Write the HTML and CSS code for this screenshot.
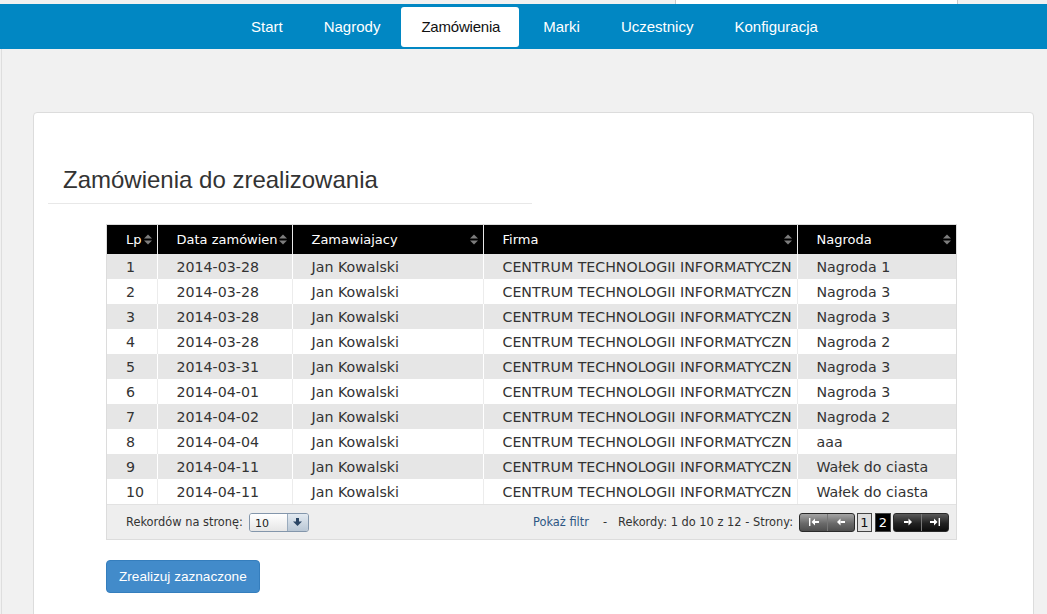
FILE: index.html
```html
<!DOCTYPE html>
<html lang="pl">
<head>
<meta charset="utf-8">
<title>Zamówienia</title>
<link rel="stylesheet" href="styles.css">
</head>
<body>
<div class="topstrip"><div class="seg-a"></div><div class="seg-b"></div><div class="seg-c"></div></div>
<nav class="navbar">
  <a href="#">Start</a>
  <a href="#">Nagrody</a>
  <a href="#" class="active">Zamówienia</a>
  <a href="#">Marki</a>
  <a href="#">Uczestnicy</a>
  <a href="#">Konfiguracja</a>
</nav>
<div class="main">
  <div class="card">
    <div class="page-header"><h3>Zamówienia do zrealizowania</h3></div>
    <div class="grid-wrap">
      <table class="grid">
        <colgroup><col class="c1"><col class="c2"><col class="c3"><col class="c4"><col class="c5"></colgroup>
        <thead>
          <tr>
            <th>Lp<span class="sort"><svg width="8" height="11" viewBox="0 0 8 11"><polygon points="0,4.5 4,0.5 8,4.5"/><polygon points="0,6.5 8,6.5 4,10.5"/></svg></span></th>
            <th>Data zamówien<span class="sort"><svg width="8" height="11" viewBox="0 0 8 11"><polygon points="0,4.5 4,0.5 8,4.5"/><polygon points="0,6.5 8,6.5 4,10.5"/></svg></span></th>
            <th>Zamawiajacy<span class="sort"><svg width="8" height="11" viewBox="0 0 8 11"><polygon points="0,4.5 4,0.5 8,4.5"/><polygon points="0,6.5 8,6.5 4,10.5"/></svg></span></th>
            <th>Firma<span class="sort"><svg width="8" height="11" viewBox="0 0 8 11"><polygon points="0,4.5 4,0.5 8,4.5"/><polygon points="0,6.5 8,6.5 4,10.5"/></svg></span></th>
            <th>Nagroda<span class="sort"><svg width="8" height="11" viewBox="0 0 8 11"><polygon points="0,4.5 4,0.5 8,4.5"/><polygon points="0,6.5 8,6.5 4,10.5"/></svg></span></th>
          </tr>
        </thead>
        <tbody>
          <tr><td>1</td><td>2014-03-28</td><td>Jan Kowalski</td><td>CENTRUM TECHNOLOGII INFORMATYCZN</td><td>Nagroda 1</td></tr>
          <tr><td>2</td><td>2014-03-28</td><td>Jan Kowalski</td><td>CENTRUM TECHNOLOGII INFORMATYCZN</td><td>Nagroda 3</td></tr>
          <tr><td>3</td><td>2014-03-28</td><td>Jan Kowalski</td><td>CENTRUM TECHNOLOGII INFORMATYCZN</td><td>Nagroda 3</td></tr>
          <tr><td>4</td><td>2014-03-28</td><td>Jan Kowalski</td><td>CENTRUM TECHNOLOGII INFORMATYCZN</td><td>Nagroda 2</td></tr>
          <tr><td>5</td><td>2014-03-31</td><td>Jan Kowalski</td><td>CENTRUM TECHNOLOGII INFORMATYCZN</td><td>Nagroda 3</td></tr>
          <tr><td>6</td><td>2014-04-01</td><td>Jan Kowalski</td><td>CENTRUM TECHNOLOGII INFORMATYCZN</td><td>Nagroda 3</td></tr>
          <tr><td>7</td><td>2014-04-02</td><td>Jan Kowalski</td><td>CENTRUM TECHNOLOGII INFORMATYCZN</td><td>Nagroda 2</td></tr>
          <tr><td>8</td><td>2014-04-04</td><td>Jan Kowalski</td><td>CENTRUM TECHNOLOGII INFORMATYCZN</td><td>aaa</td></tr>
          <tr><td>9</td><td>2014-04-11</td><td>Jan Kowalski</td><td>CENTRUM TECHNOLOGII INFORMATYCZN</td><td>Wałek do ciasta</td></tr>
          <tr><td>10</td><td>2014-04-11</td><td>Jan Kowalski</td><td>CENTRUM TECHNOLOGII INFORMATYCZN</td><td>Wałek do ciasta</td></tr>
        </tbody>
      </table>
      <div class="grid-footer">
        <div class="per-page">
          <span>Rekordów na stronę:</span>
          <div class="select">
            <span class="select-val">10</span>
            <span class="select-btn"><svg width="9" height="8" viewBox="0 0 9 8"><rect x="3" y="0" width="3" height="4"/><polygon points="0,3.5 9,3.5 4.5,8"/></svg></span>
          </div>
        </div>
        <div class="pager-info">
          <a href="#" class="filter">Pokaż filtr</a>
          <span class="dash">-</span>
          <span>Rekordy: 1 do 10 z 12 - Strony:</span>
          <div class="pbtn-group light">
            <span class="pbtn"><svg width="10" height="8" viewBox="0 0 10 8"><rect x="0" y="0" width="1.4" height="8"/><polygon points="2.5,4 6,0.5 6,7.5"/><rect x="6" y="3" width="4" height="2"/></svg></span>
            <span class="pbtn"><svg width="8" height="8" viewBox="0 0 8 8"><polygon points="0,4 3.5,0.5 3.5,7.5"/><rect x="3.5" y="3" width="4.5" height="2"/></svg></span>
          </div>
          <span class="page">1</span>
          <span class="page current">2</span>
          <div class="pbtn-group dark">
            <span class="pbtn"><svg width="8" height="8" viewBox="0 0 8 8"><rect x="0" y="3" width="4.5" height="2"/><polygon points="4.5,0.5 8,4 4.5,7.5"/></svg></span>
            <span class="pbtn"><svg width="10" height="8" viewBox="0 0 10 8"><rect x="0" y="3" width="4" height="2"/><polygon points="4,0.5 7.5,4 4,7.5"/><rect x="8.6" y="0" width="1.4" height="8"/></svg></span>
          </div>
        </div>
      </div>
    </div>
    <button class="btn-primary" type="button">Zrealizuj zaznaczone</button>
  </div>
</div>
</body>
</html>
```

FILE: styles.css
```css
* { box-sizing: border-box; }
html, body { margin: 0; padding: 0; }
body {
  background: #f1f1f1;
  font-family: "Liberation Sans", Arial, sans-serif;
  width: 1047px;
  height: 614px;
  overflow: hidden;
}

.topstrip { display: flex; height: 4px; }
.topstrip .seg-a { width: 676px; background: #f1f1f1; border-right: 1px solid #c9c9c9; }
.topstrip .seg-b { width: 282px; background: #fff; border-right: 1px solid #c9c9c9; }
.topstrip .seg-c { flex: 1; background: #f1f1f1; }

.navbar {
  background: #0187c3;
  height: 45px;
  display: flex;
  align-items: center;
  padding-left: 231px;
}
.navbar a {
  display: block;
  height: 40px;
  line-height: 40px;
  padding: 0 20px;
  margin-right: 1px;
  color: #fff;
  font-size: 15px;
  text-decoration: none;
  border-radius: 3px;
}
.navbar a.active {
  background: #fff;
  color: #111;
  padding: 0 19px 0 20px;
  margin-right: 4px;
  letter-spacing: -0.2px;
}

.main {
  margin-left: 1px;
  border-left: 1px solid #dedede;
  padding: 63px 13px 0 31px;
}

.card {
  background: #fff;
  border: 1px solid #dcdcdc;
  border-radius: 4px;
  min-height: 560px;
  padding: 0 14px;
}

.page-header {
  width: 484px;
  margin-top: 54px;
  padding: 0 15px 10px;
  border-bottom: 1px solid #e8e8e8;
}
.page-header h3 {
  margin: 0;
  font-size: 24px;
  line-height: 26px;
  font-weight: normal;
  color: #333;
}

.grid-wrap {
  margin: 20px 0 0 58px;
  width: 851px;
  border: 1px solid #dcdcdc;
  font-family: "DejaVu Sans", Verdana, sans-serif;
}
.grid {
  width: 849px;
  table-layout: fixed;
  border-collapse: collapse;
}
.grid .c1 { width: 50px; }
.grid .c2 { width: 135px; }
.grid .c3 { width: 191px; }
.grid .c4 { width: 314px; }
.grid .c5 { width: 159px; }

.grid th {
  position: relative;
  height: 29px;
  padding: 0 13px 0 19px;
  background: #000;
  color: #fff;
  font-size: 13px;
  font-weight: normal;
  text-align: left;
  white-space: nowrap;
  overflow: hidden;
  border-right: 1px solid #e8e8e8;
}
.grid th:last-child { border-right: none; }
.grid .sort {
  position: absolute;
  right: 5px;
  top: 50%;
  margin-top: -6px;
  line-height: 0;
}
.grid .sort svg { fill: #7d7d7d; }

.grid td {
  height: 25px;
  padding: 0 3px 0 19px;
  font-size: 14.2px;
  color: #333;
  white-space: nowrap;
  overflow: hidden;
  border-right: 1px solid #ececec;
}
.grid td:last-child { border-right: none; }
.grid tbody tr:nth-child(odd) td { background: #e6e6e6; border-right-color: #fff; }
.grid tbody tr:nth-child(odd) td:last-child { border-right: none; }

.grid-footer {
  height: 35px;
  background: #eeeeee;
  border-top: 1px solid #e2e2e2;
  display: flex;
  align-items: center;
  justify-content: space-between;
  padding: 0 7px 0 19px;
  font-size: 11.4px;
  color: #333;
}
.per-page { display: flex; align-items: center; }
.select {
  margin-left: 6px;
  width: 60px;
  height: 19px;
  display: flex;
  border: 1px solid #8396ab;
  border-radius: 3px;
  overflow: hidden;
}
.select-val {
  flex: 1;
  padding-left: 5px;
  line-height: 19px;
  font-size: 11px;
  color: #222;
  background: linear-gradient(#ffffff, #e6e6e6);
}
.select-btn {
  width: 21px;
  display: flex;
  align-items: center;
  justify-content: center;
  border-left: 1px solid #9aabbd;
  background: linear-gradient(#e3eaf1, #b9c7d5);
}
.select-btn svg { fill: #2a4564; }

.pager-info { display: flex; align-items: center; }
.filter { color: #2d5683; text-decoration: none; }
.dash { margin: 0 11px 0 14px; }
.pbtn-group {
  display: flex;
  height: 19px;
  border: 1px solid #2a2a2a;
  border-radius: 3px;
  overflow: hidden;
  margin-left: 6px;
}
.pbtn-group.light { background: linear-gradient(#a5a5a5, #6a6a6a 55%, #4e4e4e); }
.pbtn-group.dark { background: linear-gradient(#5a5a5a, #222 55%, #0c0c0c); margin-left: 2px; }
.pbtn {
  width: 27px;
  display: flex;
  align-items: center;
  justify-content: center;
}
.pbtn + .pbtn { border-left: 1px solid #777; }
.pbtn svg { fill: #fff; }
.page {
  display: inline-block;
  width: 15px;
  height: 19px;
  line-height: 17px;
  text-align: center;
  font-size: 13px;
  border: 1px solid #444;
  background: #dedede;
  color: #111;
  margin-left: 2px;
}
.page.current { background: #000; color: #fff; margin-left: 3px; width: 16px; }

.btn-primary {
  display: block;
  margin: 20px 0 0 58px;
  padding: 6px 12px;
  font-family: "Liberation Sans", Arial, sans-serif;
  font-size: 13.6px;
  line-height: 19px;
  color: #fff;
  background: #428bca;
  border: 1px solid #357ebd;
  border-radius: 4px;
}
```
